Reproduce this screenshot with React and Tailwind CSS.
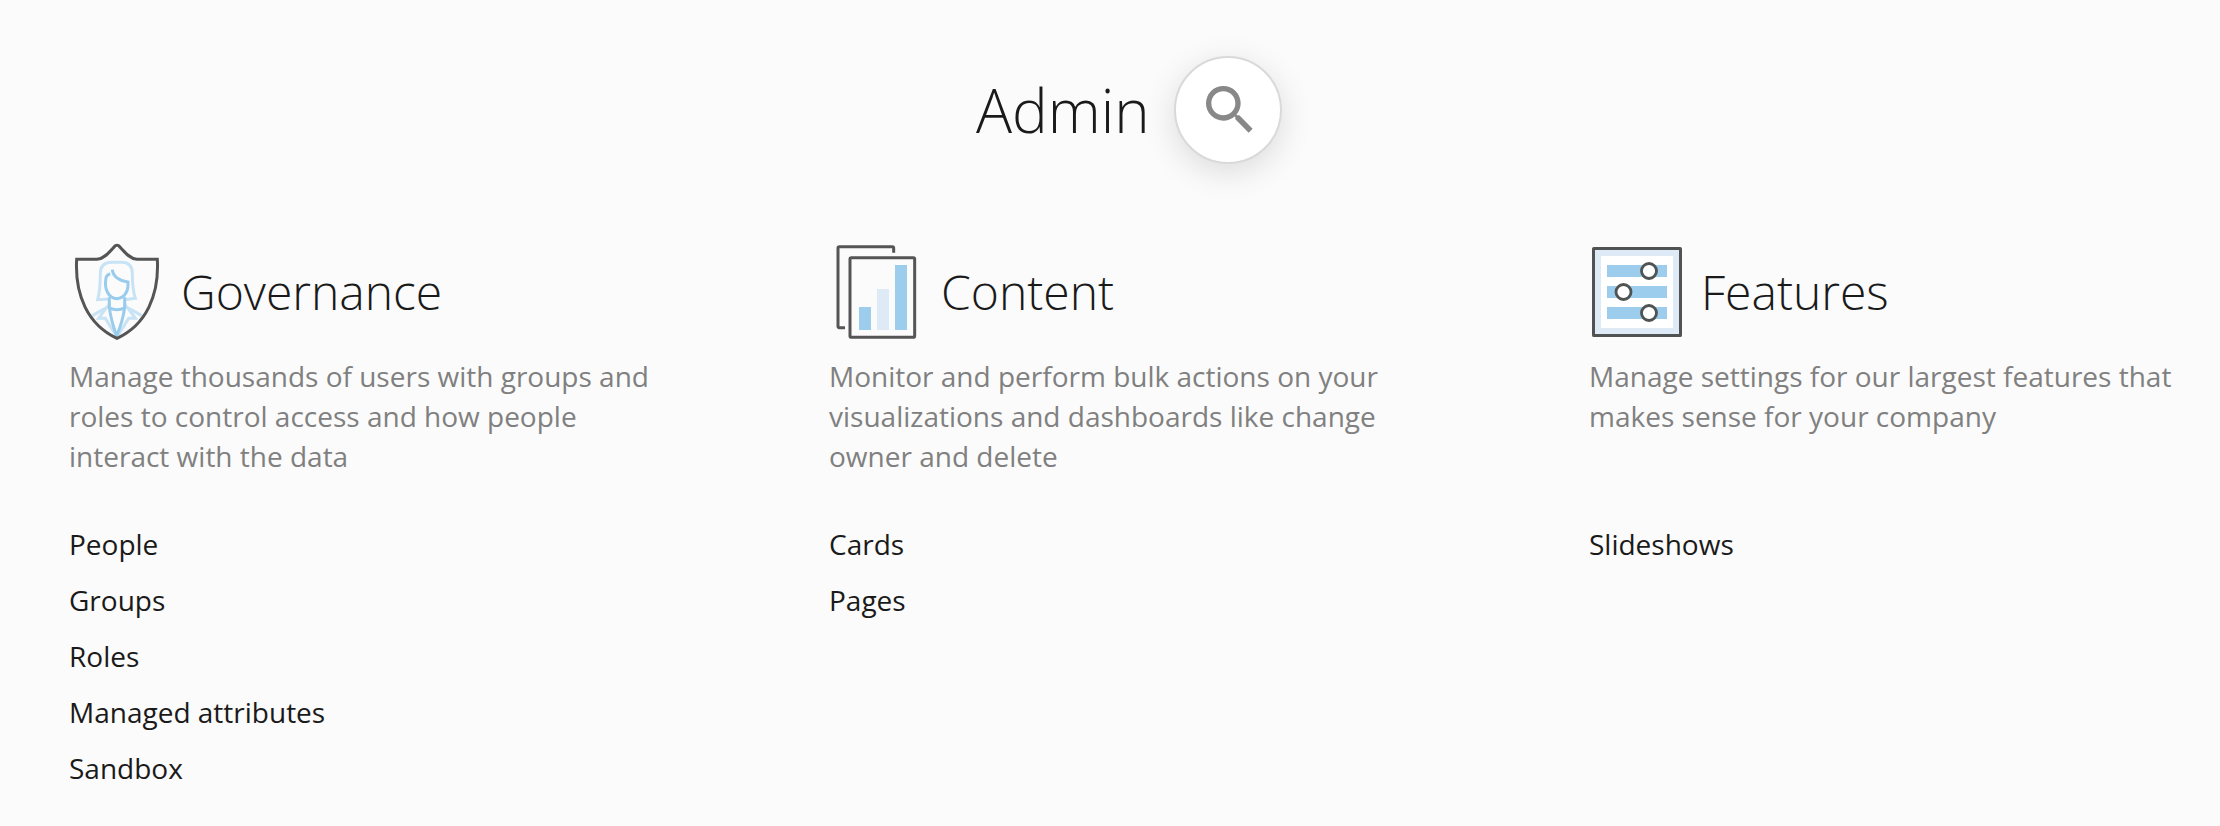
function ShieldIcon() {
  return (
    <svg className="h-[100px] w-24 shrink-0" viewBox="27 30 288 300" fill="none" strokeWidth="9">
      <g stroke="#c8e3f5">
        <path d="M148 207 L113 209 Q121 180 121 130 Q121 97 156 97 H184 Q217 97 217 130 Q217 180 226 205 L193 209" />
        <path d="M148 220 Q146 234 128 239 L97 257" />
        <path d="M194 220 Q196 234 214 239 L245 257" />
        <path d="M137 236 L116 265 H136 L168 316" />
        <path d="M205 236 L226 265 H206 L174 316" />
      </g>
      <g stroke="#99ccec">
        <path d="M151 132 Q137 134 137 151 C134 176 144 205 171 206 C195 205 206 181 204 156 Q184 154 170 143 Q158 133 157 119" />
        <path d="M148 202 V234 Q171 244 194 234 V202" />
        <path d="M148 232 Q153 272 170 317 Q189 272 194 232" />
      </g>
      <path
        stroke="#555"
        d="M50 88 H111 C136 86 153 60 166 47 Q171 44 176 47 C189 60 206 86 231 88 H292 C298 195 259 284 171 325 C83 284 44 195 50 88 Z"
      />
    </svg>
  );
}

function ChartIcon() {
  return (
    <svg className="h-[100px] w-24 shrink-0" viewBox="27 30 288 300" fill="none">
      <path d="M221 68 V54 Q221 50 217 50 H58 Q54 50 54 54 V289 Q54 293 58 293 H75" stroke="#555" strokeWidth="9" />
      <rect x="90" y="83" width="194" height="239" rx="4" stroke="#555" strokeWidth="9" />
      <rect x="117" y="231" width="36" height="69" fill="#9ccdec" />
      <rect x="171" y="177" width="36" height="123" fill="#deebf7" />
      <rect x="225" y="105" width="36" height="195" fill="#9ccdec" />
    </svg>
  );
}

function SlidersIcon() {
  return (
    <svg className="h-[100px] w-24 shrink-0" viewBox="27 30 288 300">
      <rect x="40.5" y="55.5" width="261" height="261" rx="1" fill="#deebf7" stroke="#505353" strokeWidth="9" />
      <path d="M63 78h216v216H63z" fill="#fff" />
      <path d="M81 105h180v36H81zM81 168h180v36H81zM81 231h180v36H81z" fill="#9ccdec" />
      <g fill="#fff" stroke="#505353" strokeWidth="8.5">
        <circle cx="207" cy="123" r="22.5" />
        <circle cx="130.5" cy="186" r="22.5" />
        <circle cx="207" cy="249" r="22.5" />
      </g>
    </svg>
  );
}

const sections = [
  {
    title: "Governance",
    Icon: ShieldIcon,
    text: "Manage thousands of users with groups and roles to control access and how people interact with the data",
    links: ["People", "Groups", "Roles", "Managed attributes", "Sandbox"],
  },
  {
    title: "Content",
    Icon: ChartIcon,
    text: "Monitor and perform bulk actions on your visualizations and dashboards like change owner and delete",
    links: ["Cards", "Pages"],
  },
  {
    title: "Features",
    Icon: SlidersIcon,
    text: "Manage settings for our largest features that makes sense for your company",
    links: ["Slideshows"],
  },
];

export default function App() {
  return (
    <main className="h-[826px] overflow-hidden bg-[#fbfbfb] pt-14 font-['Open_Sans',sans-serif] text-[#1a1a1a]">
      <header className="flex h-[108px] items-center pl-[976px]">
        <h1 className="w-[198px] text-[60px] leading-[80px] font-light">Admin</h1>
        <button
          aria-label="Search"
          className="flex size-[108px] items-center justify-center rounded-full border-2 border-[#d9d9d9] bg-white pl-1 shadow-[0_8px_32px_rgba(0,0,0,0.13)]"
        >
          <svg className="size-16" viewBox="0 0 24 24" fill="#888">
            <path d="M15.5 14h-.79l-.28-.27A6.471 6.471 0 0 0 16 9.5 6.5 6.5 0 1 0 9.5 16c1.61 0 3.09-.59 4.23-1.57l.27.28v.79l5 4.99L20.49 19l-4.99-5zm-6 0C7.01 14 5 11.99 5 9.5S7.01 5 9.5 5 14 7.01 14 9.5 11.99 14 9.5 14z" />
          </svg>
        </button>
      </header>
      <div className="mt-[76px] grid grid-cols-[600px_600px_600px] gap-x-40 pl-[69px]">
        {sections.map(({ title, Icon, text, links }) => (
          <section key={title}>
            <div className="flex h-[100px] items-center gap-4">
              <Icon />
              <h2 className="pt-1 text-5xl leading-[66px] font-light">{title}</h2>
            </div>
            <p className="mt-4 h-[120px] text-[28px] leading-10 text-[#808080]">{text}</p>
            <ul className="mt-10 text-[28px] leading-[56px]">
              {links.map((link) => (
                <li key={link}>{link}</li>
              ))}
            </ul>
          </section>
        ))}
      </div>
    </main>
  );
}
